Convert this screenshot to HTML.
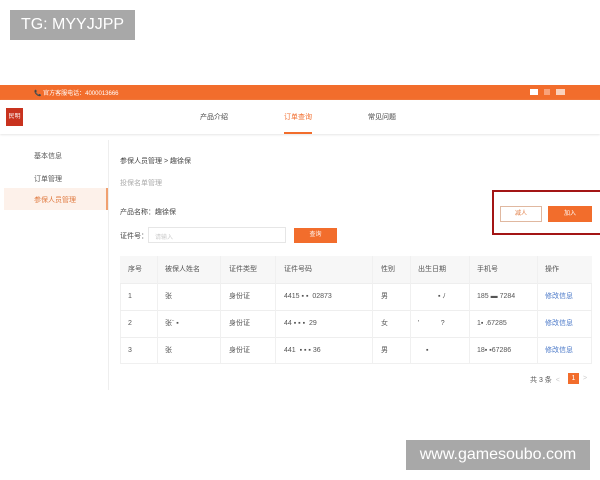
<!DOCTYPE html>
<html><head><meta charset="utf-8"><style>
*{margin:0;padding:0;box-sizing:border-box}
body{width:600px;height:480px;background:#fff;position:relative;overflow:hidden;font-family:"Liberation Sans","Noto Sans CJK SC",sans-serif;color:#555}
.a{position:absolute;white-space:nowrap}
.s{font-size:7px}
.wm{background:#a8a8a8;color:#fff;font-size:16px;line-height:30px;text-align:center}
.th{background:#f7f7f7}
.cell{position:absolute;font-size:7px;line-height:27px;white-space:nowrap;top:0}
.row{position:absolute;left:0;width:600px;height:27px}
</style></head><body>
<div class="a wm" style="left:10px;top:10px;width:125px;height:30px">TG: MYYJJPP</div>
<div class="a wm" style="left:406px;top:440px;width:184px;height:30px">www.gamesoubo.com</div>

<div class="a" style="left:0;top:85px;width:600px;height:15px;background:#f26d2c"></div>
<div class="a s" style="left:34px;top:88px;color:#fff;font-size:6px">📞 官方客服电话：4000013666</div>
<div class="a" style="left:530px;top:89px;width:8px;height:6px;background:#fff"></div>
<div class="a" style="left:544px;top:89px;width:6px;height:6px;background:#f9a27a"></div>
<div class="a" style="left:556px;top:89px;width:9px;height:6px;background:#fbd1bc"></div>
<div class="a" style="left:0;top:100px;width:600px;height:34px;background:#fff;box-shadow:0 1px 2px #e6e6e6"></div>
<div class="a" style="left:6px;top:108px;width:17px;height:18px;background:#c8321e;color:#fff;font-size:6px;line-height:18px;text-align:center">民明</div>
<div class="a s" style="left:200px;top:112px;color:#444">产品介绍</div>
<div class="a s" style="left:284px;top:112px;color:#f26d2c">订单查询</div>
<div class="a" style="left:284px;top:132px;width:28px;height:2px;background:#f26d2c"></div>
<div class="a s" style="left:368px;top:112px;color:#444">常见问题</div>

<div class="a" style="left:108px;top:140px;width:1px;height:250px;background:#eee"></div>
<div class="a s" style="left:34px;top:151px">基本信息</div>
<div class="a s" style="left:34px;top:174px">订单管理</div>
<div class="a" style="left:4px;top:188px;width:104px;height:22px;background:#fdf1ea;border-right:2px solid #f0a070"></div>
<div class="a s" style="left:34px;top:195px;color:#e07a40">参保人员管理</div>

<div class="a s" style="left:120px;top:156px;color:#444">参保人员管理 &gt; 趣徐保</div>
<div class="a s" style="left:120px;top:178px;color:#aaa">投保名单管理</div>
<div class="a s" style="left:120px;top:207px;color:#444">产品名称：趣徐保</div>
<div class="a s" style="left:120px;top:231px;color:#444">证件号：</div>
<div class="a" style="left:148px;top:227px;width:138px;height:16px;border:1px solid #e6e6e6;font-size:6px;color:#ccc;padding:4px 6px">请输入</div>
<div class="a" style="left:294px;top:228px;width:43px;height:15px;background:#f26d2c;color:#fff;font-size:6px;text-align:center;line-height:15px">查询</div>

<div class="a" style="left:492px;top:190px;width:110px;height:45px;border:2px solid #a31515"></div>
<div class="a" style="left:500px;top:206px;width:42px;height:16px;border:1px solid #e0b8a0;background:#fff;color:#e07a40;font-size:6px;text-align:center;line-height:14px">减人</div>
<div class="a" style="left:548px;top:206px;width:44px;height:16px;background:#f26d2c;color:#fff;font-size:6px;text-align:center;line-height:16px">加入</div>

<div class="a" style="left:120px;top:256px;width:472px;height:108px;border:1px solid #f0f0f0"></div>
<div class="a th" style="left:120px;top:256px;width:472px;height:27px"></div>
<div class="a" style="left:120px;top:310px;width:472px;height:1px;background:#eee"></div>
<div class="a" style="left:120px;top:337px;width:472px;height:1px;background:#eee"></div>
<div class="a" style="left:120px;top:283px;width:472px;height:1px;background:#eee"></div>
<div class="a" style="left:157px;top:256px;width:1px;height:108px;background:#f0f0f0"></div>
<div class="a" style="left:220px;top:256px;width:1px;height:108px;background:#f0f0f0"></div>
<div class="a" style="left:275px;top:256px;width:1px;height:108px;background:#f0f0f0"></div>
<div class="a" style="left:372px;top:256px;width:1px;height:108px;background:#f0f0f0"></div>
<div class="a" style="left:410px;top:256px;width:1px;height:108px;background:#f0f0f0"></div>
<div class="a" style="left:469px;top:256px;width:1px;height:108px;background:#f0f0f0"></div>
<div class="a" style="left:537px;top:256px;width:1px;height:108px;background:#f0f0f0"></div>

<div class="row" style="top:256px">
<div class="cell" style="left:128px">序号</div><div class="cell" style="left:165px">被保人姓名</div><div class="cell" style="left:229px">证件类型</div><div class="cell" style="left:284px">证件号码</div><div class="cell" style="left:381px">性别</div><div class="cell" style="left:418px">出生日期</div><div class="cell" style="left:477px">手机号</div><div class="cell" style="left:545px">操作</div>
</div>
<div class="row" style="top:283px">
<div class="cell" style="left:128px">1</div><div class="cell" style="left:165px">张</div><div class="cell" style="left:229px">身份证</div><div class="cell" style="left:284px">4415 ▪ ▪ &nbsp;02873</div><div class="cell" style="left:381px">男</div><div class="cell" style="left:438px">▪ ﾉ</div><div class="cell" style="left:477px">185 ▬ 7284</div><div class="cell" style="left:545px;color:#4a78c8">修改信息</div>
</div>
<div class="row" style="top:310px">
<div class="cell" style="left:128px">2</div><div class="cell" style="left:165px">张¨ ▪</div><div class="cell" style="left:229px">身份证</div><div class="cell" style="left:284px">44 ▪ ▪ ▪ &nbsp;29</div><div class="cell" style="left:381px">女</div><div class="cell" style="left:418px">'&nbsp;&nbsp;&nbsp;&nbsp;&nbsp;&nbsp;&nbsp;&nbsp;&nbsp;&nbsp;&nbsp;?</div><div class="cell" style="left:477px">1▪ .67285</div><div class="cell" style="left:545px;color:#4a78c8">修改信息</div>
</div>
<div class="row" style="top:337px">
<div class="cell" style="left:128px">3</div><div class="cell" style="left:165px">张</div><div class="cell" style="left:229px">身份证</div><div class="cell" style="left:284px">441 &nbsp;▪ ▪ ▪ 36</div><div class="cell" style="left:381px">男</div><div class="cell" style="left:426px">▪</div><div class="cell" style="left:477px">18▪ ▪67286</div><div class="cell" style="left:545px;color:#4a78c8">修改信息</div>
</div>

<div class="a s" style="left:530px;top:375px">共 3 条 &nbsp;<span style="color:#ccc">&lt;</span></div>
<div class="a" style="left:568px;top:373px;width:11px;height:11px;background:#f26d2c;color:#fff;font-size:7px;text-align:center;line-height:11px">1</div>
<div class="a s" style="left:583px;top:375px;color:#ccc">&gt;</div>
</body></html>
